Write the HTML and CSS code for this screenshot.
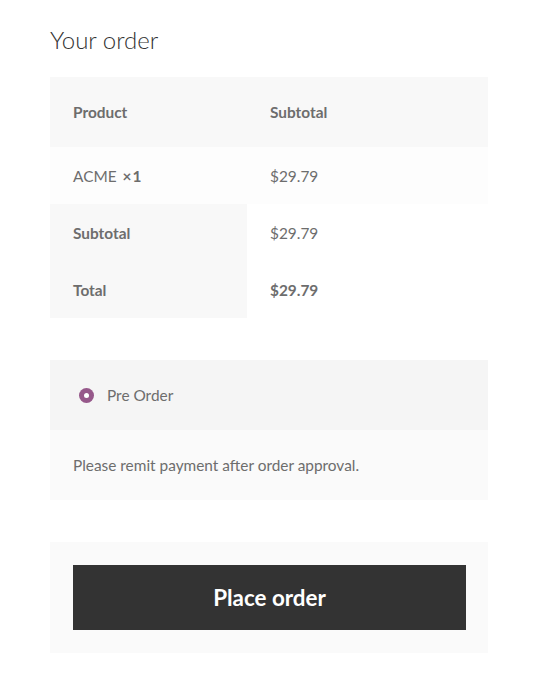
FILE: index.html
```html
<!DOCTYPE html>
<html>
<head>
<meta charset="utf-8">
<link rel="stylesheet" href="styles.css">
</head>
<body>
<div class="checkout">
  <h3 class="title">Your order</h3>
  <table class="order">
    <thead>
      <tr><th class="c1">Product</th><th>Subtotal</th></tr>
    </thead>
    <tbody>
      <tr class="item"><td class="c1">ACME <strong class="qty">×&#8202;1</strong></td><td>$29.79</td></tr>
    </tbody>
    <tfoot>
      <tr><th class="c1">Subtotal</th><td>$29.79</td></tr>
      <tr><th class="c1">Total</th><td><strong>$29.79</strong></td></tr>
    </tfoot>
  </table>
  <div class="payment">
    <div class="method"><span class="radio"></span><span>Pre Order</span></div>
    <div class="desc">Please remit payment after order approval.</div>
  </div>
  <div class="place">
    <button class="btn">Place order</button>
  </div>
</div>
</body>
</html>
```
FILE: styles.css
```css
html, body { margin: 0; padding: 0; background: #fff; }
body {
  font-family: Lato, "Open Sans", sans-serif;
  color: #6d6d6d;
  font-size: 15.4px;
}
.checkout { padding: 0 53px 0 50px; width: 438px; }
.title {
  margin: 0;
  padding-top: 26px;
  height: 77px;
  box-sizing: border-box;
  font-size: 24px;
  font-weight: 300;
  color: #333;
  line-height: 28px;
}
.order { width: 438px; border-collapse: collapse; border-spacing: 0; }
.order th, .order td { text-align: left; padding: 0 0 0 23px; vertical-align: middle; }
.order th { font-weight: 700; }
.order .c1 { width: 174px; }
.order thead th { background: #f8f8f8; height: 70px; }
.order tbody td { background: #fdfdfd; height: 57px; }
.order tfoot th { background: #f8f8f8; height: 57px; }
.order tfoot td { background: #fff; height: 57px; }
.order strong { font-weight: 700; }
.order .qty { margin-left: 2px; }
.payment { margin-top: 42px; }
.method {
  background: #f5f5f5; height: 70px; display: flex; align-items: center;
  padding-left: 29px; gap: 13px;
}
.radio {
  width: 15px; height: 15px; border-radius: 50%; background: #96588a;
  display: flex; align-items: center; justify-content: center;
}
.radio::after { content: ""; width: 5px; height: 5px; border-radius: 50%; background: #fff; }
.desc { background: #fafafa; height: 70px; display: flex; align-items: center; padding-left: 23px; }
.place { margin-top: 42px; background: #fafafa; padding: 23px 22px 23px 23px; }
.btn {
  display: block; width: 100%; height: 65px; border: 0; border-radius: 0;
  background: #333; color: #fff; font-family: inherit; font-size: 22.4px; font-weight: 700;
  cursor: pointer;
}
```
